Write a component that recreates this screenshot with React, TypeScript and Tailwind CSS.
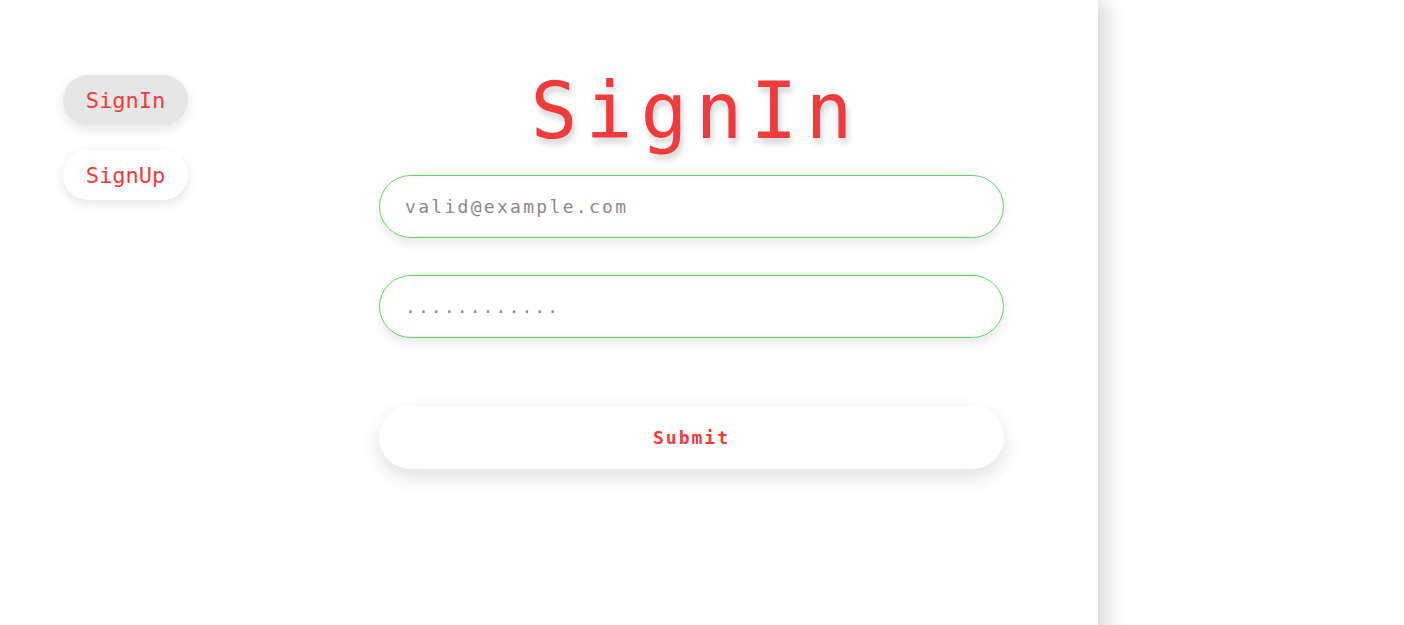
import { useState } from "react";

const mono = "font-['DejaVu_Sans_Mono','Liberation_Mono',monospace]";

export default function App() {
  const [tab, setTab] = useState<"in" | "up">("in");

  const pill = (active: boolean) =>
    [
      "h-[50px] w-[125px] rounded-full text-[22px] text-[#f03c3c] shadow-[0_4px_12px_rgba(0,0,0,0.1)]",
      active ? "bg-[#e6e6e6]" : "bg-white",
    ].join(" ");

  return (
    <div className={`${mono} flex min-h-[663px] bg-white`}>
      <div className="flex h-[663px] w-[1098px] shrink-0 bg-white shadow-[6px_0_22px_rgba(0,0,0,0.18)]">
        {/* side nav */}
        <div className="ml-[63px] mt-[75px] flex flex-col gap-[25px]">
          <button className={pill(tab === "in")} onClick={() => setTab("in")}>
            SignIn
          </button>
          <button className={pill(tab === "up")} onClick={() => setTab("up")}>
            SignUp
          </button>
        </div>

        {/* form */}
        <div className="ml-[191px] mt-[72px] flex w-[625px] flex-col">
          <h1 className="pl-[8px] text-center text-[78px] font-light leading-none tracking-[8px] text-[#ef3b3b] [text-shadow:2px_5px_6px_rgba(0,0,0,0.18)]">
            SignIn
          </h1>
          <input
            type="email"
            placeholder="valid@example.com"
            className="mt-[25px] h-[63px] rounded-full border border-[#5cd65c] px-[25px] text-[18px] tracking-[2.3px] text-[#555] shadow-[0_6px_10px_rgba(0,0,0,0.08)] outline-none placeholder:text-[#8a8a8a]"
          />
          <input
            type="password"
            placeholder="............"
            className="mt-[37px] h-[63px] rounded-full border border-[#5cd65c] px-[25px] text-[18px] tracking-[2.1px] text-[#555] shadow-[0_6px_10px_rgba(0,0,0,0.08)] outline-none placeholder:text-[#8a8a8a]"
          />
          <button className="mt-[68px] h-[63px] rounded-full bg-white text-[18px] font-bold tracking-[2px] text-[#f03c3c] shadow-[0_8px_20px_rgba(0,0,0,0.12)]">
            Submit
          </button>
        </div>
      </div>
      <div className="flex-1" />
    </div>
  );
}
